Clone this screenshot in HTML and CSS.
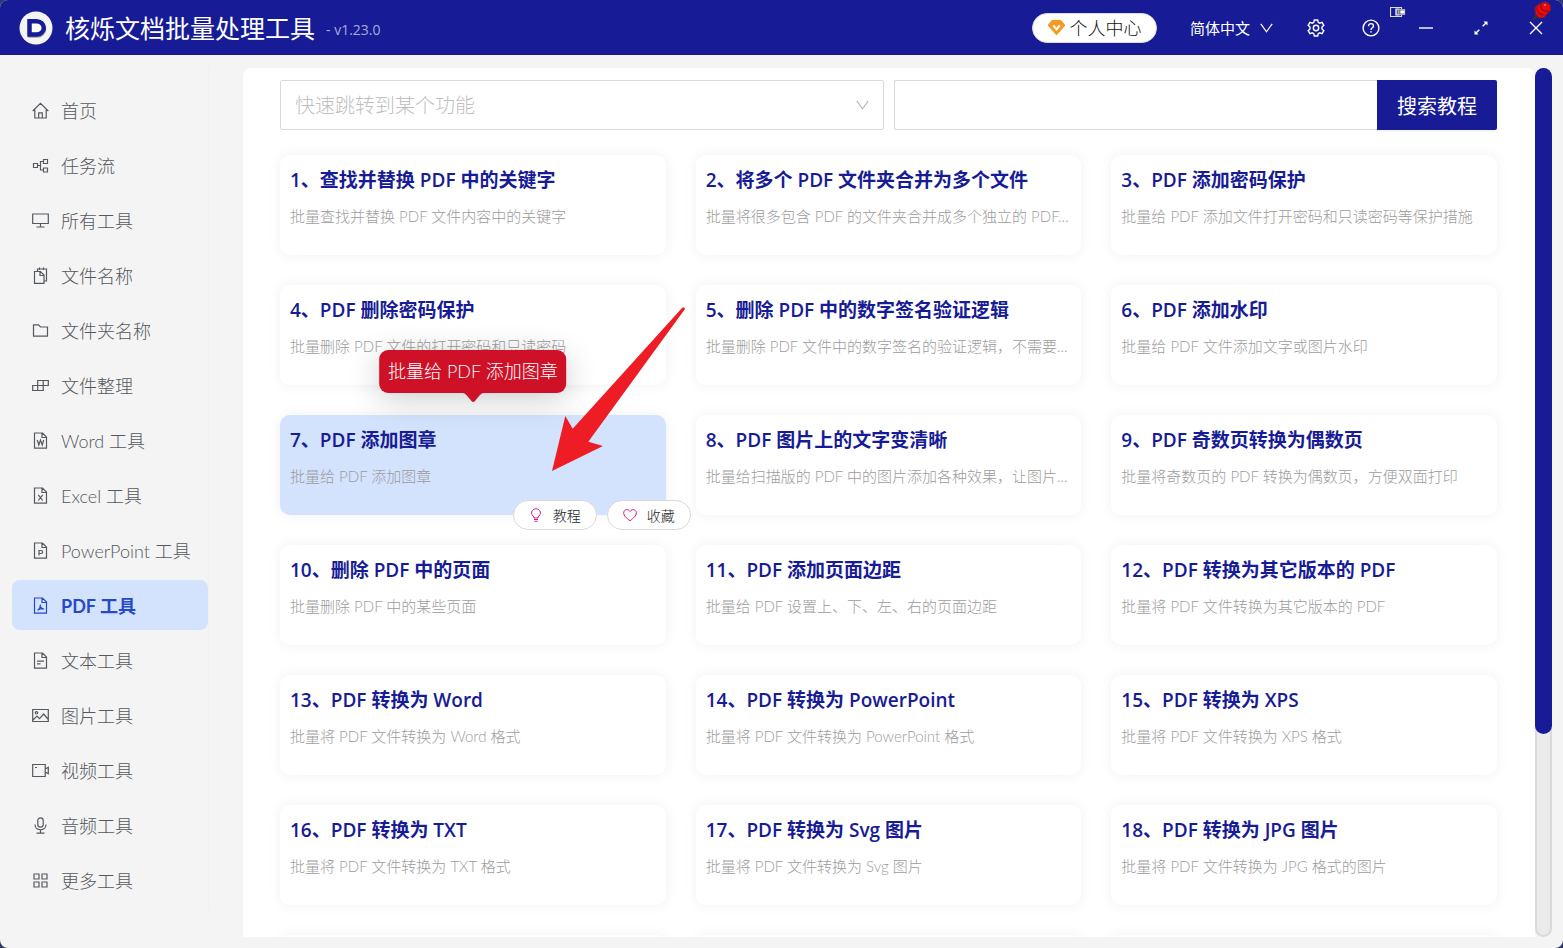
FILE: index.html
```html
<!DOCTYPE html>
<html lang="zh-CN">
<head>
<meta charset="utf-8">
<title>核烁文档批量处理工具</title>
<link rel="stylesheet" href="styles.css">
</head>
<body>
<div class="window">
  <header class="titlebar">
    <svg class="logo" viewBox="0 0 34 34" aria-hidden="true">
      <circle cx="17" cy="17" r="16.5" fill="#f4f4f4"/>
      <path d="M11.5 11.5h6.5a7 6.5 0 0 1 0 13h-6.5z" fill="none" stroke="#9a9aa6" stroke-width="4.5"/>
      <path d="M10.500 10.200h7a7.300 6.700 0 0 1 0 13.400h-7z" fill="#fff" stroke="#171c96" stroke-width="4.500"/>
    </svg>
    <h1 class="app-name">核烁文档批量处理工具</h1>
    <span class="version">- v1.23.0</span>
    <button class="account" type="button">
      <svg class="gem" viewBox="0 0 17 15" aria-hidden="true"><path d="M4.200.5h8.600L16.600 5.300 8.500 14.500.4 5.300z" fill="#f59a23" stroke="#f59a23" stroke-linejoin="round"/><path d="M5.300 5.300l3.200 4 3.200-4" fill="none" stroke="#fff" stroke-width="2"/></svg>
      个人中心
    </button>
    <div class="language">
      <select class="language-select" aria-label="语言"><option>简体中文</option></select>
      <svg class="chevron" viewBox="0 0 13 10" aria-hidden="true"><path d="M.8.8l5.700 8 5.700-8"/></svg>
    </div>
    <div class="controls">
      <button class="control" type="button" aria-label="设置"><svg viewBox="0 0 18 18"><path d="M7.300 1h3.400l.5 2.300 1.600.9 2.300-.8 1.700 2.900-1.800 1.700v2l1.800 1.700-1.700 2.900-2.300-.8-1.600.9-.5 2.300H7.300l-.5-2.300-1.600-.9-2.300.8-1.700-2.900L3 10V8L1.200 6.300l1.700-2.900 2.300.8 1.600-.9z"/><circle cx="9" cy="9" r="2.700"/></svg></button>
      <button class="control" type="button" aria-label="帮助"><svg viewBox="0 0 18 18"><circle cx="9" cy="9" r="7.900"/><path d="M6.500 7.200c0-3.500 5-3.200 5-.2 0 1.700-2.500 1.900-2.500 3.900"/><path d="M9 12.200v1.400" stroke-width="1.600"/></svg></button>
      <button class="control" type="button" aria-label="最小化"><svg viewBox="0 0 18 18"><path d="M2 9h14"/></svg></button>
      <button class="control" type="button" aria-label="最大化"><svg viewBox="0 0 18 18"><path d="M3.500 14.500l3.800-3.800M10.700 7.300l3.800-3.800" stroke-width="1.500"/><path d="M2.500 11.500v4h4zM11.500 2.500h4v4z" fill="currentColor" stroke="none"/></svg></button>
      <button class="control" type="button" aria-label="关闭"><svg viewBox="0 0 18 18"><path d="M3 3l12 12M15 3L3 15"/></svg></button>
    </div>
    <svg class="dock-mark" viewBox="0 0 16 12" aria-hidden="true"><path d="M.5 1.500h11v9H.5z" fill="#171c96" stroke="#ddd"/><path d="M6 3h3v6H6z" fill="#6466a0"/><path d="M8.500 3.500h6v5h-6z" fill="#777" stroke="#aaa"/><path d="M11 5h3v2h-3z" fill="#fff"/></svg>
    <svg class="pin" viewBox="0 0 20 20" aria-hidden="true"><path d="M1 18.500l4-4" stroke="#333" stroke-width="2.500"/><path d="M3 7l3-3 4-2 4-1 4 3 .5 5-3 3-3 4-5 1-4-4z" fill="#f00808" stroke="#821c2b"/><path d="M9 3c-1 5 2 8 8 7M5 7c0 4 3 7 7 7" fill="none" stroke="#8b1020"/><path d="M12 4h2" stroke="#ffb0b0"/></svg>
  </header>

  <div class="body">
    <nav class="sidebar">
      <a class="nav-item" href="#"><svg viewBox="0 0 17 17"><path d="M.7 9L8.500 1.300 16.300 9M2.800 7.800v8.200h11.400V7.800M6.700 16v-5.200h3.600V16"/></svg>首页</a>
      <a class="nav-item" href="#"><svg viewBox="0 0 17 17"><path d="M1.500 6.500h4v4h-4zM11.500 2.500h4v4h-4zM11.500 11h4v4h-4zM5.500 8.500h3M11.500 4.500h-3v8.500h3"/></svg>任务流</a>
      <a class="nav-item" href="#"><svg viewBox="0 0 17 17"><path d="M.7 2h15.600v9.500H.7zM8.500 11.500v3.500M4.500 15h8"/></svg>所有工具</a>
      <a class="nav-item" href="#"><svg viewBox="0 0 17 17"><path d="M2.500 4.500h6l3.500 3.500v8.300H2.500zM8 4.500v4h4M5.500 4.500V2h9v12H12M7.500.5v2.500M11.500.5v2.500"/></svg>文件名称</a>
      <a class="nav-item" href="#"><svg viewBox="0 0 17 17"><path d="M1.500 2.800h5l2 2.200h7v9.200h-14z"/></svg>文件夹名称</a>
      <a class="nav-item" href="#"><svg viewBox="0 0 17 17"><path d="M.7 8.500h10.500v5H.7zM5.700 3.500h10.600v5H5.700zM5.700 8.500v5M11.200 3.500v10"/></svg>文件整理</a>
      <a class="nav-item" href="#"><svg viewBox="0 0 17 17"><path d="M2.500 1h8l4 4v11.200h-12zM10 1v4.500h4.500M5.300 8l1.500 5 1.700-5 1.700 5 1.500-5"/></svg>Word 工具</a>
      <a class="nav-item" href="#"><svg viewBox="0 0 17 17"><path d="M2.500 1h8l4 4v11.200h-12zM10 1v4.500h4.500M6.300 7.800l4.400 5.700M10.700 7.800l-4.400 5.700"/></svg>Excel 工具</a>
      <a class="nav-item" href="#"><svg viewBox="0 0 17 17"><path d="M2.500 1h8l4 4v11.200h-12zM10 1v4.500h4.500M7 13.500v-5h2c2.200 0 2.200 3 0 3H7"/></svg>PowerPoint 工具</a>
      <a class="nav-item nav-item-active" href="#" aria-current="page"><svg viewBox="0 0 17 17"><path d="M2.500 1h8l4 4v11.200h-12zM10 1v4.500h4.500M8.300 7.500c.2 3.500-1.300 5-2.800 5.700M8.300 9.500c.7 1.800 2 2.500 3.700 2.500-2-.7-4 0-6.500 1.200"/></svg>PDF 工具</a>
      <a class="nav-item" href="#"><svg viewBox="0 0 17 17"><path d="M2.500 1h8l4 4v11.200h-12zM10 1v4.500h4.500M5 9.200h7M5 11.800h3.500"/></svg>文本工具</a>
      <a class="nav-item" href="#"><svg viewBox="0 0 17 17"><path d="M.7 2.500h15.600v12H.7zM1 13l4-4 2.500 2.700L11.700 7l4.600 5.500"/><circle cx="4.500" cy="5.800" r="1.200"/></svg>图片工具</a>
      <a class="nav-item" href="#"><svg viewBox="0 0 17 17"><path d="M.7 2.500h12.500v12H.7zM13.200 7l3.100-1.700v6.400l-3.100-1.700M3 5.500h2"/></svg>视频工具</a>
      <a class="nav-item" href="#"><svg viewBox="0 0 17 17"><rect x="5.800" y=".8" width="5.400" height="9.400" rx="2.700"/><path d="M3 7.500c0 7 11 7 11 0M8.500 13v3M4.500 16.200h8"/></svg>音频工具</a>
      <a class="nav-item" href="#"><svg viewBox="0 0 17 17"><path d="M2 2h5v5H2zM10 2h5v5h-5zM2 10h5v5H2zM10 10h5v5h-5z"/></svg>更多工具</a>
    </nav>

    <main class="content">
      <div class="toolbar">
        <div class="jump">
          <select class="jump-select" aria-label="快速跳转到某个功能"><option>快速跳转到某个功能</option></select>
          <svg class="chevron" viewBox="0 0 13 10" aria-hidden="true"><path d="M.8.8l5.700 8 5.700-8"/></svg>
        </div>
        <form class="search">
          <input class="search-input" type="text" aria-label="搜索教程">
          <button class="search-button" type="button">搜索教程</button>
        </form>
      </div>

      <div class="cards">
        <article class="card"><h2 class="card-title">1、查找并替换 PDF 中的关键字</h2><p class="card-text">批量查找并替换 PDF 文件内容中的关键字</p></article>
        <article class="card"><h2 class="card-title">2、将多个 PDF 文件夹合并为多个文件</h2><p class="card-text">批量将很多包含 PDF 的文件夹合并成多个独立的 PDF...</p></article>
        <article class="card"><h2 class="card-title">3、PDF 添加密码保护</h2><p class="card-text">批量给 PDF 添加文件打开密码和只读密码等保护措施</p></article>
        <article class="card"><h2 class="card-title">4、PDF 删除密码保护</h2><p class="card-text">批量删除 PDF 文件的打开密码和只读密码</p></article>
        <article class="card"><h2 class="card-title">5、删除 PDF 中的数字签名验证逻辑</h2><p class="card-text">批量删除 PDF 文件中的数字签名的验证逻辑，不需要...</p></article>
        <article class="card"><h2 class="card-title">6、PDF 添加水印</h2><p class="card-text">批量给 PDF 文件添加文字或图片水印</p></article>
        <article class="card card-active">
          <h2 class="card-title">7、PDF 添加图章</h2><p class="card-text">批量给 PDF 添加图章</p>
          <div class="tooltip" role="tooltip">批量给 PDF 添加图章<svg class="tooltip-tail" viewBox="0 0 22 10" aria-hidden="true"><path d="M0 0h22c-3 0-4 2-5.500 3.500L12.500 8.200q-1.500 1.600-3 0L5.500 3.500C4 2 3 0 0 0z" fill="#ce1126"/></svg></div>
          <div class="card-actions">
            <button class="pill" type="button"><svg viewBox="0 0 14 14"><path d="M5 10V8.800C1 6.500 2.300.8 7 .8S13 6.500 9 8.800V10zM5 11.500h4M5.500 13.300h3"/></svg>教程</button>
            <button class="pill" type="button"><svg viewBox="0 0 14 14"><path d="M7 12.800C3.500 10 .7 8 .7 4.800.7 1.400 5 .4 7 3.500c2-3.100 6.300-2.100 6.300 1.300 0 3.200-2.800 5.200-6.300 8z"/></svg>收藏</button>
          </div>
          <svg class="pointer" viewBox="0 0 140 170" aria-hidden="true"><path d="M2 166L15.300 111l7.400 12.700L132 3q2-2 3 1L38.300 136.700 53 141z" fill="#ee1c24"/></svg>
        </article>
        <article class="card"><h2 class="card-title">8、PDF 图片上的文字变清晰</h2><p class="card-text">批量给扫描版的 PDF 中的图片添加各种效果，让图片...</p></article>
        <article class="card"><h2 class="card-title">9、PDF 奇数页转换为偶数页</h2><p class="card-text">批量将奇数页的 PDF 转换为偶数页，方便双面打印</p></article>
        <article class="card"><h2 class="card-title">10、删除 PDF 中的页面</h2><p class="card-text">批量删除 PDF 中的某些页面</p></article>
        <article class="card"><h2 class="card-title">11、PDF 添加页面边距</h2><p class="card-text">批量给 PDF 设置上、下、左、右的页面边距</p></article>
        <article class="card"><h2 class="card-title">12、PDF 转换为其它版本的 PDF</h2><p class="card-text">批量将 PDF 文件转换为其它版本的 PDF</p></article>
        <article class="card"><h2 class="card-title">13、PDF 转换为 Word</h2><p class="card-text">批量将 PDF 文件转换为 Word 格式</p></article>
        <article class="card"><h2 class="card-title">14、PDF 转换为 PowerPoint</h2><p class="card-text">批量将 PDF 文件转换为 PowerPoint 格式</p></article>
        <article class="card"><h2 class="card-title">15、PDF 转换为 XPS</h2><p class="card-text">批量将 PDF 文件转换为 XPS 格式</p></article>
        <article class="card"><h2 class="card-title">16、PDF 转换为 TXT</h2><p class="card-text">批量将 PDF 文件转换为 TXT 格式</p></article>
        <article class="card"><h2 class="card-title">17、PDF 转换为 Svg 图片</h2><p class="card-text">批量将 PDF 文件转换为 Svg 图片</p></article>
        <article class="card"><h2 class="card-title">18、PDF 转换为 JPG 图片</h2><p class="card-text">批量将 PDF 文件转换为 JPG 格式的图片</p></article>
        <article class="card"></article>
        <article class="card"></article>
        <article class="card"></article>
      </div>
    </main>
    <div class="scroll-track"><div class="scroll-thumb"></div></div>
  </div>
</div>
</body>
</html>
```
FILE: styles.css
```css
* { box-sizing: border-box; }

body {
  margin: 0;
  background: #303a68;
  font-family: Lato, "Noto Sans CJK SC", sans-serif;
  font-weight: 300;
}

button, select, input { font: inherit; }
h1, h2, p { margin: 0; }

svg {
  fill: none;
  stroke: currentColor;
  stroke-width: 1.2;
  flex: none;
}

.window {
  display: flex;
  flex-direction: column;
  height: 100vh;
  border-radius: 8px;
  overflow: hidden;
  background: #f4f4f4;
}

/* Title bar */
.titlebar {
  position: relative;
  display: flex;
  align-items: center;
  flex: none;
  height: 55px;
  padding-left: 19px;
  background: #171c96;
  color: #fff;
}
.logo { width: 34px; height: 34px; stroke: none; }
.app-name {
  margin-left: 12px;
  font-size: 25px;
  line-height: 36px;
  font-weight: 400;
  white-space: nowrap;
}
.version {
  margin: 4px auto 0 11px;
  font-family: "Open Sans", sans-serif;
  font-size: 14px;
  font-weight: 400;
  color: #a9acd8;
}
.account {
  display: flex;
  align-items: center;
  justify-content: center;
  gap: 5px;
  width: 125px;
  height: 30px;
  padding: 0;
  border: 1px solid #d9d9d9;
  border-radius: 15px;
  background: #fff;
  color: #111;
  font-size: 18px;
  line-height: 28px;
}
.gem { width: 17px; height: 15px; stroke: none; }
.language {
  position: relative;
  display: flex;
  align-items: center;
  width: 83px;
  margin: 0 15px 0 33px;
}
.language-select {
  appearance: none;
  width: 100%;
  height: 30px;
  padding: 0;
  border: 0;
  background: transparent;
  color: #fff;
  font-size: 15px;
  font-weight: 400;
}
.chevron { position: absolute; right: 0; width: 13px; height: 10px; pointer-events: none; }
.controls { display: flex; }
.control {
  display: flex;
  align-items: center;
  justify-content: center;
  width: 55px;
  height: 55px;
  padding: 0;
  border: 0;
  background: transparent;
  color: #fff;
}
.control svg { width: 18px; height: 18px; stroke-width: 1.4; }
.dock-mark { position: absolute; top: 6px; right: 157px; width: 16px; height: 12px; }
.pin { position: absolute; top: 1px; right: 11px; width: 20px; height: 20px; }

/* Body */
.body {
  display: flex;
  flex: 1;
  min-height: 0;
  padding: 13px 11px 11px 12px;
}

.sidebar {
  display: flex;
  flex-direction: column;
  gap: 5px;
  flex: none;
  width: 197px;
  margin: 0 34px 29px 0;
  padding-top: 17px;
  border-right: 1px solid #f0f0f0;
}
.nav-item {
  display: flex;
  align-items: center;
  gap: 12px;
  flex: none;
  height: 50px;
  padding-left: 20px;
  border-radius: 8px;
  color: #55585f;
  font-size: 18px;
  text-decoration: none;
  white-space: nowrap;
}
.nav-item svg { width: 17px; height: 17px; }
.nav-item-active { background: #d3e2fd; color: #2549c7; font-weight: 700; }

.content {
  flex: 1;
  min-width: 0;
  padding: 12px 38px 0 37px;
  border-radius: 8px 8px 0 0;
  overflow: hidden;
  background: #fff;
}
.toolbar {
  display: grid;
  grid-template-columns: 1fr 1fr;
  gap: 10px;
  margin-bottom: 25px;
}
.jump { position: relative; display: flex; align-items: center; }
.jump-select {
  appearance: none;
  width: 100%;
  height: 50px;
  padding: 0 14px;
  border: 1px solid #d9d9d9;
  border-radius: 2px;
  background: #fff;
  color: #bfbfbf;
  font-size: 20px;
}
.jump .chevron { right: 15px; color: #b8b8b8; }
.search { display: flex; }
.search-input {
  flex: 1;
  min-width: 0;
  height: 50px;
  padding: 0 14px;
  border: 1px solid #d9d9d9;
  border-right: 0;
  border-radius: 2px 0 0 2px;
  font-size: 20px;
}
.search-button {
  width: 120px;
  height: 50px;
  padding: 0;
  border: 0;
  border-radius: 0 2px 2px 0;
  background: #171c96;
  box-shadow: 0 2px 0 rgba(0, 0, 0, 0.04);
  color: #fff;
  font-size: 20px;
  font-weight: 400;
}

.cards {
  display: grid;
  grid-template-columns: repeat(3, minmax(0, 1fr));
  gap: 30px;
}
.card {
  position: relative;
  min-height: 100px;
  padding: 10px;
  border-radius: 10px;
  background: #fff;
  box-shadow: 0 0 14px rgba(0, 0, 0, 0.06);
}
.card-title {
  color: #171c96;
  font-family: "Open Sans", "Noto Sans CJK SC", sans-serif;
  font-size: 19px;
  font-weight: 600;
  line-height: 30px;
  white-space: nowrap;
}
.card-text {
  margin-top: 11px;
  color: #9c9c9c;
  font-size: 15px;
  line-height: 20px;
  white-space: nowrap;
  overflow: hidden;
  text-overflow: ellipsis;
}
.card-active { z-index: 1; background: #d3e2fd; }

.tooltip {
  position: absolute;
  bottom: calc(100% + 22px);
  left: 50%;
  transform: translateX(-50%);
  padding: 8px 9px;
  border-radius: 9px;
  background: #ce1126;
  box-shadow: 0 6px 32px rgba(0, 0, 0, 0.2);
  color: #fff;
  font-size: 18px;
  line-height: 27px;
  white-space: nowrap;
}
.tooltip-tail {
  position: absolute;
  top: 100%;
  left: calc(50% - 11px);
  width: 22px;
  height: 10px;
  stroke: none;
}
.card-actions {
  position: absolute;
  right: -25px;
  bottom: -15px;
  display: flex;
  gap: 10px;
}
.pill {
  display: flex;
  align-items: center;
  justify-content: center;
  gap: 10px;
  width: 84px;
  height: 30px;
  padding: 0;
  border: 1px solid #d9d9d9;
  border-radius: 15px;
  background: #fff;
  color: #222;
  font-size: 14px;
}
.pill svg { width: 14px; height: 14px; color: #d6188c; stroke-width: 1; }
.pointer {
  position: absolute;
  top: -110px;
  left: 270px;
  width: 140px;
  height: 170px;
  stroke: none;
  pointer-events: none;
}

.scroll-track {
  flex: none;
  width: 17px;
  border: 2px solid #dadada;
  border-radius: 9px;
  background: #ebebeb;
}
.scroll-thumb {
  height: 77%;
  margin: -2px;
  border-radius: 9px;
  background: #171c96;
}
```
